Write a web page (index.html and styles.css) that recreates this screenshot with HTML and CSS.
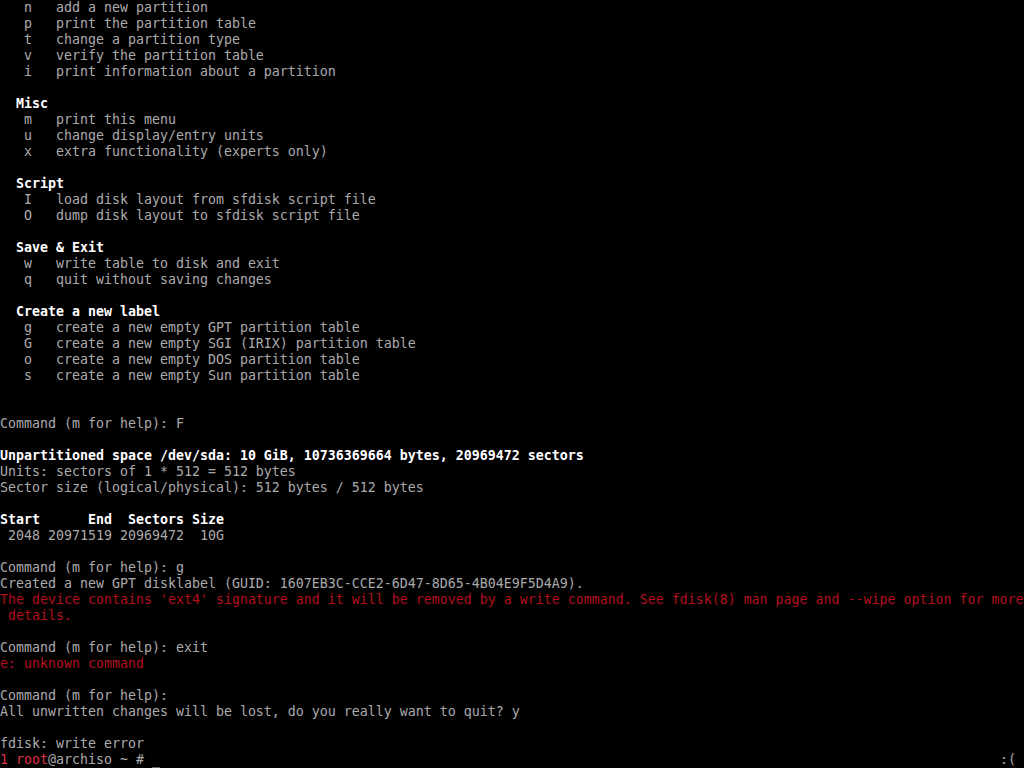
FILE: index.html
```html
<!DOCTYPE html>
<html>
<head>
<meta charset="utf-8">
<link rel="stylesheet" href="styles.css">
</head>
<body>
<div class="screen">
<pre class="console">   n   add a new partition
   p   print the partition table
   t   change a partition type
   v   verify the partition table
   i   print information about a partition

<b class="hi">  Misc</b>
   m   print this menu
   u   change display/entry units
   x   extra functionality (experts only)

<b class="hi">  Script</b>
   I   load disk layout from sfdisk script file
   O   dump disk layout to sfdisk script file

<b class="hi">  Save &amp; Exit</b>
   w   write table to disk and exit
   q   quit without saving changes

<b class="hi">  Create a new label</b>
   g   create a new empty GPT partition table
   G   create a new empty SGI (IRIX) partition table
   o   create a new empty DOS partition table
   s   create a new empty Sun partition table


Command (m for help): F

<b class="hi">Unpartitioned space /dev/sda: 10 GiB, 10736369664 bytes, 20969472 sectors</b>
Units: sectors of 1 * 512 = 512 bytes
Sector size (logical/physical): 512 bytes / 512 bytes

<b class="hi">Start      End  Sectors Size</b>
 2048 20971519 20969472  10G

Command (m for help): g
Created a new GPT disklabel (GUID: 1607EB3C-CCE2-6D47-8D65-4B04E9F5D4A9).
<span class="err">The device contains 'ext4' signature and it will be removed by a write command. See fdisk(8) man page and --wipe option for more</span>
<span class="err"> details.</span>

Command (m for help): exit
<span class="err">e: unknown command</span>

Command (m for help): 
All unwritten changes will be lost, do you really want to quit? y

fdisk: write error</pre>
<div class="status">
<pre class="status-left"><span class="tab">1 root</span>@archiso ~ # _</pre>
<pre class="status-right">:( </pre>
</div>
</div>
</body>
</html>
```

FILE: styles.css
```css
html, body {
  margin: 0;
  padding: 0;
  background: #000;
}
.screen {
  width: 1024px;
  height: 768px;
  overflow: hidden;
  display: flex;
  flex-direction: column;
  background: #000;
}
pre {
  margin: 0;
  font-family: "DejaVu Sans Mono", "Liberation Mono", monospace;
  font-size: 13.29px;
  line-height: 16px;
  color: #aaaaaa;
  white-space: pre;
}
.console {
  height: 752px;
  overflow: hidden;
}
.hi {
  color: #ffffff;
  font-weight: bold;
}
.err {
  color: #b3101c;
}
.status {
  height: 16px;
  display: flex;
  justify-content: space-between;
}
.tab {
  color: #dd3344;
}
```
